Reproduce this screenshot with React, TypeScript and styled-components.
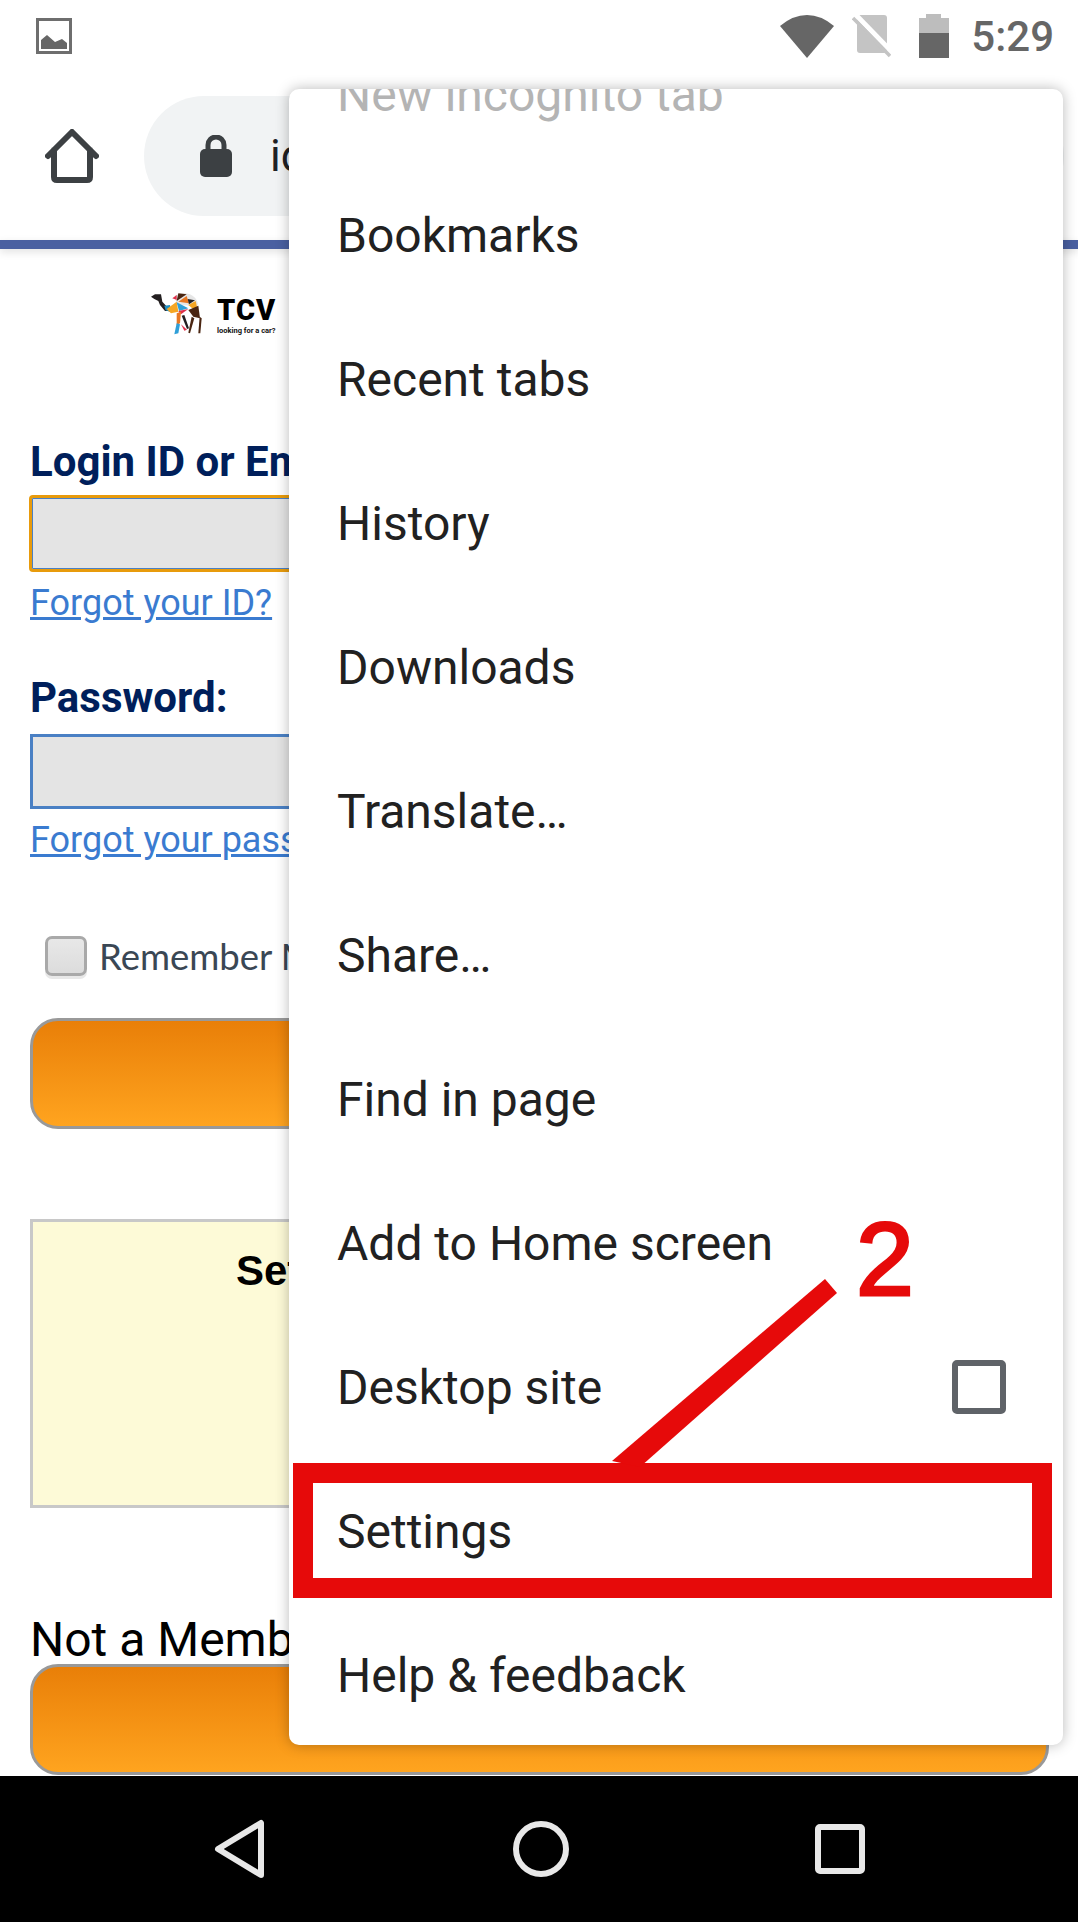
import React from 'react'
import styled, { createGlobalStyle } from 'styled-components'

const MENU_ITEMS = [
  'New incognito tab',
  'Bookmarks',
  'Recent tabs',
  'History',
  'Downloads',
  'Translate…',
  'Share…',
  'Find in page',
  'Add to Home screen',
  'Desktop site',
  'Settings',
  'Help & feedback',
]

const App = () => {
  return (
    <Screen>
      <GlobalStyle />
      <StatusBar>
        <svg width='36' height='36' viewBox='0 0 36 36'>
          <rect x='1.5' y='1.5' width='33' height='33' fill='none' stroke='#6e6e6e' strokeWidth='3' />
          <path d='M5 22 L11 17 L19 24 L26 21 L31 25 V31 H5 Z' fill='#666' />
        </svg>
        <StatusIcons>
          <svg width='54' height='43' viewBox='0 0 54 43'>
            <path d='M27 43 L0 11 Q13 0 27 0 Q41 0 54 11 Z' fill='#666' />
          </svg>
          <svg width='39' height='44' viewBox='0 0 39 44'>
            <rect x='5' y='1' width='30' height='38' rx='3' fill='#c4c4c4' />
            <path d='M3 0 L40 38' stroke='#fff' strokeWidth='5' />
            <path d='M1 4 L38 42' stroke='#c4c4c4' strokeWidth='3.5' />
          </svg>
          <BatteryIcon width='30' height='44' viewBox='0 0 30 44'>
            <path d='M7 0 H22 V4 H30 V19 H0 V4 H7 Z' fill='#bdbdbd' />
            <rect y='19' width='30' height='25' fill='#666' />
          </BatteryIcon>
          <Clock>5:29</Clock>
        </StatusIcons>
      </StatusBar>

      <Toolbar>
        <svg width='54' height='54' viewBox='0 0 54 54'>
          <path
            d='M3 27 L27 3 L51 27 M9 21 V48 Q9 51 12 51 H42 Q45 51 45 48 V21'
            fill='none'
            stroke='#3c4043'
            strokeWidth='6'
            strokeLinecap='round'
            strokeLinejoin='round'
          />
        </svg>
        <Omnibox>
          <svg width='32' height='42' viewBox='0 0 32 42'>
            <path d='M8 16 V10 A8 8 0 0 1 24 10 V16' fill='none' stroke='#3c4043' strokeWidth='5' />
            <rect y='14' width='32' height='28' rx='5' fill='#3c4043' />
          </svg>
          <Url>id.tc-v.com</Url>
        </Omnibox>
      </Toolbar>
      <ProgressLine />

      <Page>
        <Logo>
          <svg width='70' height='55' viewBox='0 0 210 165'>
            <path d='M90 32 Q125 15 150 38 Q160 50 158 62 L95 60 Z' fill='#e6e6e6' />
            <path d='M18 35 L30 28 L48 28 L52 50 L70 70 L72 78 L60 78 L45 60 L40 48 L28 42 Z' fill='#231f20' />
            <path d='M82 40 L95 30 L95 45 Z' fill='#e0304a' />
            <path d='M100 25 L125 28 L95 48 Z' fill='#4a2511' />
            <path d='M100 50 L125 33 L132 55 Z' fill='#e87722' />
            <path d='M58 62 L75 60 L78 82 L62 76 Z' fill='#1f8fc4' />
            <path d='M65 72 L95 50 L100 80 L78 85 Z' fill='#f5a623' />
            <path d='M95 52 L130 70 L102 78 Z' fill='#2f9fd8' />
            <path d='M130 60 L152 48 L160 85 Z' fill='#f5a623' />
            <path d='M128 42 L150 46 L132 58 Z' fill='#231f20' />
            <path d='M130 75 L160 62 L165 100 L145 95 Z' fill='#4a2511' />
            <path d='M100 78 L130 72 L108 88 Z' fill='#e0304a' />
            <path d='M95 85 L108 80 L105 115 L95 120 Z' fill='#e87722' />
            <path d='M95 115 L105 118 L100 145 L88 148 Z' fill='#2f9fd8' />
            <path d='M108 118 L126 134 L118 137 Z' fill='#e0304a' />
            <path d='M110 92 L118 90 L132 130 L126 132 Z' fill='#231f20' />
            <path d='M140 95 L148 100 L135 145 L130 143 Z' fill='#4a2511' />
            <path d='M164 95 L170 100 L166 145 L160 145 Z' fill='#4a2511' />
          </svg>
          <Brand>
            <BrandName>TCV</BrandName>
            <BrandTag>looking for a car?</BrandTag>
          </Brand>
        </Logo>

        <FieldLabel>Login ID or Email:</FieldLabel>
        <TextField $focused />
        <ForgotLink>Forgot your ID?</ForgotLink>

        <PasswordLabel>Password:</PasswordLabel>
        <TextField />
        <ForgotLink>Forgot your password?</ForgotLink>

        <RememberRow>
          <RememberBox />
          <RememberText>Remember Me</RememberText>
        </RememberRow>

        <OrangeButton />

        <Notice>
          <NoticeTitle>Set</NoticeTitle>
        </Notice>

        <MemberText>Not a Member?</MemberText>
        <OrangeButton $tall />
      </Page>

      <NavBar>
        <svg width='52' height='60' viewBox='0 0 52 60'>
          <path d='M47 4 V56 L4 30 Z' fill='none' stroke='#e8e8e8' strokeWidth='6' strokeLinejoin='round' />
        </svg>
        <svg width='56' height='56' viewBox='0 0 56 56'>
          <circle cx='28' cy='28' r='25' fill='none' stroke='#e8e8e8' strokeWidth='6' />
        </svg>
        <svg width='50' height='50' viewBox='0 0 50 50'>
          <rect x='3' y='3' width='44' height='44' rx='2' fill='none' stroke='#e8e8e8' strokeWidth='6' />
        </svg>
      </NavBar>

      <Menu>
        <MenuList>
          {MENU_ITEMS.map((item, index) => (
            <MenuItem key={item} $faded={index === 0}>
              {item}
              {item === 'Desktop site' && <MenuCheck />}
            </MenuItem>
          ))}
        </MenuList>
      </Menu>

      <Callout />
      <CalloutLine width='240' height='190' viewBox='0 0 240 190'>
        <polygon points='213,2 225,16 28,190 0,184' fill='#e60a0a' />
      </CalloutLine>
      <CalloutNumber>2</CalloutNumber>
    </Screen>
  )
}

export default App

const GlobalStyle = createGlobalStyle`
  html, body {
    margin: 0;
    padding: 0;
    background: #fff;
  }
`

const Screen = styled.div`
  position: relative;
  width: 1078px;
  height: 1922px;
  overflow: hidden;
  display: flex;
  flex-direction: column;
  background: #fff;
  font-family: Roboto, 'Liberation Sans', sans-serif;
`

const StatusBar = styled.div`
  height: 72px;
  flex: none;
  padding: 0 24px 0 36px;
  display: flex;
  align-items: center;
  justify-content: space-between;
`

const StatusIcons = styled.div`
  display: flex;
  align-items: center;
  gap: 18px;
`

const BatteryIcon = styled.svg`
  margin-left: 10px;
`

const Clock = styled.span`
  font-size: 42px;
  font-weight: 500;
  color: #666;
  margin-left: 4px;
`

const Toolbar = styled.div`
  height: 168px;
  flex: none;
  padding: 0 0 0 45px;
  display: flex;
  align-items: center;
  gap: 45px;
`

const Omnibox = styled.div`
  flex: 1;
  height: 120px;
  margin-right: 14px;
  padding-left: 56px;
  border-radius: 60px;
  background: #f1f3f4;
  display: flex;
  align-items: center;
  gap: 38px;
`

const Url = styled.span`
  font-size: 44px;
  color: #202124;
`

const ProgressLine = styled.div`
  height: 9px;
  flex: none;
  background: #4a60a1;
  box-shadow: 0 3px 8px rgba(0, 0, 0, 0.12);
`

const Page = styled.div`
  flex: 1;
  min-height: 0;
  padding: 36px 29px 0 30px;
  display: flex;
  flex-direction: column;
  overflow: hidden;
`

const Logo = styled.div`
  margin-left: 115px;
  height: 55px;
  flex: none;
  display: flex;
  gap: 2px;
`

const Brand = styled.div`
  padding-top: 13px;
  display: flex;
  flex-direction: column;
`

const BrandName = styled.span`
  font-size: 29px;
  line-height: 24px;
  font-weight: 900;
  letter-spacing: 1px;
  color: #000;
`

const BrandTag = styled.span`
  margin-top: 3px;
  font-size: 7.5px;
  line-height: 12px;
  font-weight: 700;
  white-space: nowrap;
  color: #111;
`

const FieldLabel = styled.label`
  flex: none;
  margin-top: 97px;
  height: 50px;
  line-height: 50px;
  font-size: 42px;
  font-weight: 700;
  color: #001f5b;
  white-space: nowrap;
`

const PasswordLabel = styled(FieldLabel)`
  margin-top: 46px;
`

const TextField = styled.div<{ $focused?: boolean }>`
  box-sizing: border-box;
  flex: none;
  height: ${(p) => (p.$focused ? 77 : 75)}px;
  margin-top: ${(p) => (p.$focused ? 8 : 11)}px;
  margin-left: ${(p) => (p.$focused ? -1 : 0)}px;
  background: #e4e4e4;
  border: 3px solid ${(p) => (p.$focused ? '#e89b0c' : '#4a80c4')};
  border-radius: ${(p) => (p.$focused ? 4 : 0)}px;
  box-shadow: ${(p) => (p.$focused ? 'inset 0 0 0 1px #4a80c4' : 'none')};
`

const ForgotLink = styled.a`
  flex: none;
  margin-top: 7px;
  height: 48px;
  line-height: 48px;
  font-size: 36px;
  color: #3a7bd0;
  text-decoration: underline;
  white-space: nowrap;
`

const RememberRow = styled.div`
  flex: none;
  margin-top: 71px;
  margin-left: 15px;
  height: 42px;
  display: flex;
  align-items: center;
  gap: 12px;
`

const RememberBox = styled.div`
  box-sizing: border-box;
  width: 42px;
  height: 40px;
  border: 3px solid #a9a9a9;
  border-radius: 7px;
  background: linear-gradient(#e8e8e8, #dcdcdc);
  box-shadow: 0 3px 0 #e8e8e8;
`

const RememberText = styled.span`
  font-family: Lato, sans-serif;
  font-size: 36.5px;
  color: #3a4754;
  white-space: nowrap;
`

const OrangeButton = styled.div<{ $tall?: boolean }>`
  box-sizing: border-box;
  flex: none;
  height: 111px;
  margin-top: ${(p) => (p.$tall ? -1 : 41)}px;
  border: 3px solid #999;
  border-radius: 28px;
  background: linear-gradient(#e97f08, #ffa41f);
`

const Notice = styled.div`
  box-sizing: border-box;
  flex: none;
  height: 289px;
  margin-top: 90px;
  padding: 25px 0 0 203px;
  border: 3px solid #c8c8c8;
  background: #fdfad7;
`

const NoticeTitle = styled.span`
  font-family: 'Liberation Sans', sans-serif;
  font-size: 42px;
  line-height: 48px;
  font-weight: 700;
  color: #000;
`

const MemberText = styled.div`
  flex: none;
  margin-top: 107px;
  height: 50px;
  line-height: 50px;
  font-size: 48px;
  color: #000;
  white-space: nowrap;
`

const NavBar = styled.div`
  height: 146px;
  flex: none;
  padding: 0 213px 0 214px;
  background: #000;
  display: flex;
  align-items: center;
  justify-content: space-between;
`

const Menu = styled.div`
  position: absolute;
  left: 289px;
  top: 89px;
  width: 774px;
  height: 1656px;
  overflow: hidden;
  border-radius: 10px;
  background: #fff;
  box-shadow: 0 0 14px rgba(0, 0, 0, 0.28);
`

const MenuList = styled.div`
  margin-top: -70px;
`

const MenuItem = styled.div<{ $faded?: boolean }>`
  box-sizing: border-box;
  height: 144px;
  padding: ${(p) => (p.$faded ? 6 : 0)}px 57px 0 48px;
  display: flex;
  align-items: center;
  justify-content: space-between;
  font-size: 48px;
  color: ${(p) => (p.$faded ? '#b4b4b4' : '#212121')};
`

const MenuCheck = styled.div`
  box-sizing: border-box;
  width: 54px;
  height: 54px;
  border: 6px solid #5f6368;
  border-radius: 5px;
`

const Callout = styled.div`
  box-sizing: border-box;
  position: absolute;
  left: 293px;
  top: 1463px;
  width: 759px;
  height: 135px;
  border: 20px solid #e60a0a;
`

const CalloutLine = styled.svg`
  position: absolute;
  left: 612px;
  top: 1277px;
`

const CalloutNumber = styled.span`
  position: absolute;
  left: 856px;
  top: 1202px;
  font-family: 'Liberation Sans', sans-serif;
  font-size: 104px;
  line-height: 115px;
  color: #e60a0a;
  -webkit-text-stroke: 3px #e60a0a;
`
